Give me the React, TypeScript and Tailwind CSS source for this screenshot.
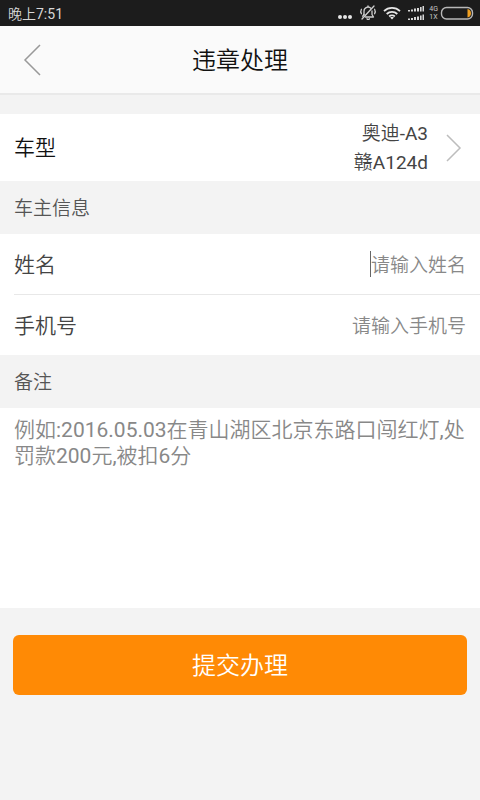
import { useState } from 'react'

type FieldProps = {
  id: string
  label: string
  placeholder: string
  type?: string
  active?: boolean
}

function StatusBar() {
  return (
    <div className="flex h-[26px] items-center justify-between bg-[#1c1c1c] pl-2 pr-1.5 text-[#d8d8d8]">
      <span className="pt-0.5 text-[14px] leading-none">晚上7:51</span>

      <div className="flex items-center">
        <svg width="16" height="26" viewBox="0 0 16 26" fill="#e6e6e6">
          <circle cx="3" cy="17" r="2" />
          <circle cx="8" cy="17" r="2" />
          <circle cx="13" cy="17" r="2" />
        </svg>

        <svg
          className="ml-1.5"
          width="18"
          height="26"
          viewBox="0 0 18 26"
          fill="none"
          stroke="#cfcfcf"
          strokeWidth="1.3"
          strokeLinecap="round"
          strokeLinejoin="round"
        >
          <path d="M5 14.5V11a4 4 0 0 1 7-2.6M13 11v3.5l1.5 2.5H6.5" />
          <path d="M5 14.5l-1.3 1.7M8 18.8c.6.9 1.8.9 2.4 0M9 5.8v.8" />
          <path d="M15 6L3 19" />
          <path d="M2.4 9.3c-.8 1.4-.8 3 0 4.4M15.6 9.3c.8 1.4.8 3 0 4.4" />
        </svg>

        <svg
          className="ml-1.5"
          width="18"
          height="26"
          viewBox="0 0 18 26"
          fill="none"
          stroke="#e6e6e6"
          strokeWidth="1.8"
        >
          <path d="M1 11.2a11.5 11.5 0 0 1 16 0" />
          <path d="M3.7 14a7.6 7.6 0 0 1 10.6 0" />
          <path d="M6.2 16.5a4 4 0 0 1 5.6 0" />
          <path d="M9 19.6l-1.9-2a2.8 2.8 0 0 1 3.8 0z" fill="#e6e6e6" stroke="none" />
        </svg>

        <svg className="ml-1.5" width="18" height="26" viewBox="0 0 18 26" fill="#d8d8d8">
          <path d="M1 10h2v1.5H1zM4 9.5h2v2H4zM7 8.5h2v3H7zM10 8h2v3.5h-2zM13 7h1.6v4.5H13zM15.5 6H17v5.5h-1.5z" />
          <path d="M1 18.5h2V20H1zM4 18h2v2H4zM7 17h2v3H7zM10 16.5h2V20h-2zM13 15.5h1.6V20H13zM15.5 14.5H17V20h-1.5z" />
        </svg>

        <div className="ml-1 text-[7px] leading-[8px] text-[#c8c8c8]">
          <div>4G</div>
          <div>1X</div>
        </div>

        <svg className="ml-0.5" width="34" height="26" viewBox="0 0 34 26" fill="none">
          <rect x="1.5" y="7.5" width="31" height="11.5" rx="5" stroke="#b8b8b8" strokeWidth="1.4" />
          <path d="M27.5 9c2.4.3 3.5 2 3.5 4.2s-1.100 4-3.500 4.300z" fill="#f0a020" />
        </svg>
      </div>
    </div>
  )
}

function SectionTitle({ children }: { children: string }) {
  return (
    <h2 className="flex h-[53px] items-center px-3.5 pt-1 text-[19px] text-[#555]">
      {children}
    </h2>
  )
}

function Field({ id, label, placeholder, type = 'text', active }: FieldProps) {
  const [value, setValue] = useState('')

  return (
    <div className="flex h-[60px] items-center justify-between px-3.5">
      <label htmlFor={id} className="pt-1 text-[21px] text-[#444]">
        {label}
      </label>
      <input
        id={id}
        type={type}
        value={value}
        placeholder={placeholder}
        onChange={(e) => setValue(e.target.value)}
        className={`field-sizing-content h-[26px] border-l text-right text-[19px] text-[#333] outline-none placeholder:text-[#888] ${
          active ? 'border-[#666]' : 'border-transparent'
        }`}
      />
    </div>
  )
}

export default function App() {
  const [remark, setRemark] = useState('')

  return (
    <div className="min-h-screen bg-[#f3f3f3] font-['Roboto','Noto_Sans_CJK_SC_DemiLight','Noto_Sans_CJK_SC',sans-serif]">
      <StatusBar />

      <header className="grid h-[69px] grid-cols-[64px_1fr_64px] items-center border-b-2 border-[#e9e9e9] bg-[#fafafa]">
        <button type="button" aria-label="返回" className="flex h-full items-center pl-[23px]">
          <svg width="18" height="32" viewBox="0 0 18 32" fill="none" stroke="#999" strokeWidth="1.5">
            <path d="M17 1L2 16l15 15" />
          </svg>
        </button>
        <h1 className="pt-0.5 text-center text-2xl text-[#111]">违章处理</h1>
      </header>

      <main className="pt-[19px]">
        <button
          type="button"
          className="flex h-[67px] w-full items-center bg-white pl-3.5 pr-[18px] text-left"
        >
          <span className="flex-1 pt-0.5 text-[21px] text-[#111]">车型</span>
          <span className="text-right text-[19px] leading-[29px] text-[#444]">
            <span className="block">奥迪-A3</span>
            <span className="block">赣A124d</span>
          </span>
          <svg
            className="ml-[18px]"
            width="16"
            height="28"
            viewBox="0 0 16 28"
            fill="none"
            stroke="#bdbdbd"
            strokeWidth="1.5"
          >
            <path d="M1 1l13 13L1 27" />
          </svg>
        </button>

        <SectionTitle>车主信息</SectionTitle>

        <div className="bg-white">
          <Field id="name" label="姓名" placeholder="请输入姓名" active />
          <hr className="ml-3.5 border-[#e8e8e8]" />
          <Field id="phone" label="手机号" placeholder="请输入手机号" type="tel" />
        </div>

        <SectionTitle>备注</SectionTitle>

        <textarea
          aria-label="备注"
          value={remark}
          placeholder="例如:2016.05.03在青山湖区北京东路口闯红灯,处罚款200元,被扣6分"
          onChange={(e) => setRemark(e.target.value)}
          className="block h-[200px] w-full resize-none bg-white py-[9px] pl-3.5 pr-1 text-[21px] leading-[26px] text-[#333] outline-none placeholder:text-[#888]"
        />

        <div className="px-[13px] py-[27px]">
          <button
            type="button"
            className="h-[60px] w-full rounded-md bg-[#ff8a05] pt-0.5 text-2xl text-white"
          >
            提交办理
          </button>
        </div>
      </main>
    </div>
  )
}
